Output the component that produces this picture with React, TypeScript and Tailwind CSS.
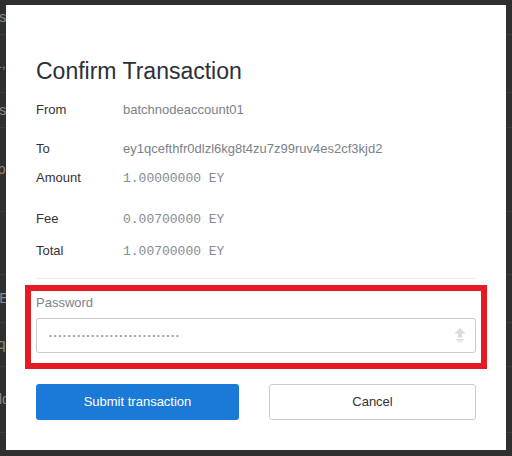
import type { ReactNode } from "react";

const bgRows: { h: string; text: string; shift: string }[] = [
  { h: "h-[35px]", text: "Alias", shift: "-ml-[24px]" },
  { h: "h-[58px]", text: "1,", shift: "-ml-[6px]" },
  { h: "h-[35px]", text: "Alias", shift: "-ml-[24px]" },
  { h: "h-[84px]", text: "Example", shift: "-ml-[38px]" },
  { h: "h-[63px]", text: "", shift: "" },
  { h: "h-[48px]", text: "YES", shift: "-ml-[10px]" },
  { h: "h-[44px]", text: "eyq", shift: "-ml-[17px]" },
  { h: "h-[66px]", text: "Add", shift: "-ml-[15px]" },
];

function Row({
  label,
  children,
  className,
}: {
  label: string;
  children: ReactNode;
  className?: string;
}) {
  return (
    <div className={`flex h-5 items-center leading-5 ${className ?? ""}`}>
      <div className="w-[87px] text-[13px] text-[#333]">{label}</div>
      <div className="text-[13px] text-[#7b808a]">{children}</div>
    </div>
  );
}

function Mono({ children }: { children: ReactNode }) {
  return (
    <span className="font-['Liberation_Mono',monospace] text-[13px] text-[#868a92]">
      {children}
    </span>
  );
}

function UploadIcon() {
  return (
    <svg width="12" height="15" viewBox="0 0 12 15" className="text-[#dadada]">
      <path d="M6 0 L11.5 5.5 L8 5.5 L8 9.5 L4 9.5 L4 5.5 L0.5 5.5 Z" fill="currentColor" />
      <rect x="2.5" y="11" width="7" height="1.6" fill="currentColor" />
      <rect x="3.5" y="13.2" width="5" height="1.2" fill="currentColor" opacity="0.7" />
    </svg>
  );
}

export default function App() {
  return (
    <div className="relative h-[456px] w-[512px] overflow-hidden bg-[#2f2f2f] font-['Liberation_Sans',Arial,sans-serif]">
      {/* page behind the overlay */}
      <div className="flex flex-col">
        {bgRows.map((r, i) => (
          <div
            key={i}
            className={`${r.h} flex items-center border-b border-[#3b3b3b] text-[14px] text-[#8a8a8a]`}
          >
            <span className={`${r.shift} whitespace-nowrap`}>{r.text}</span>
          </div>
        ))}
      </div>

      {/* modal */}
      <div className="absolute left-[6px] top-[5px] flex h-[445px] w-[500px] flex-col bg-white px-[30px] pt-[52px]">
        <h1 className="h-7 text-[23px] leading-7 font-normal text-[#2b2f38]">
          Confirm Transaction
        </h1>

        <Row label="From" className="mt-[15px]">
          batchnodeaccount01
        </Row>
        <Row label="To" className="mt-[19px]">
          ey1qcefthfr0dlzl6kg8t4zu7z99ruv4es2cf3kjd2
        </Row>
        <Row label="Amount" className="mt-[9px]">
          <Mono>1.00000000 EY</Mono>
        </Row>
        <Row label="Fee" className="mt-[21px]">
          <Mono>0.00700000 EY</Mono>
        </Row>
        <Row label="Total" className="mt-[12px]">
          <Mono>1.00700000 EY</Mono>
        </Row>

        <div className="mt-[17px] h-px w-full bg-[#ebebeb]" />

        <div className="-mx-[11px] mt-[6px] border-[6px] border-[#e41b24] px-[5px] pt-[2px] pb-[10px]">
          <div className="h-5 text-[13px] leading-5 text-[#7b808a]">Password</div>
          <div className="mt-[5px] flex h-[35px] items-center justify-between rounded-[3px] border border-[#cccccc] pr-[9px] pl-[12px]">
            <span className="text-[8px] leading-none tracking-[1.9px] text-[#9a9a9a]">
              ••••••••••••••••••••••••••••
            </span>
            <UploadIcon />
          </div>
        </div>

        <div className="mt-[15px] flex justify-between">
          <button className="h-[36px] w-[203px] rounded-[3px] bg-[#1b7ad8] text-[13px] text-white">
            Submit transaction
          </button>
          <button className="h-[36px] w-[207px] rounded-[3px] border border-[#cccccc] bg-white text-[13px] text-[#333]">
            Cancel
          </button>
        </div>
      </div>
    </div>
  );
}
